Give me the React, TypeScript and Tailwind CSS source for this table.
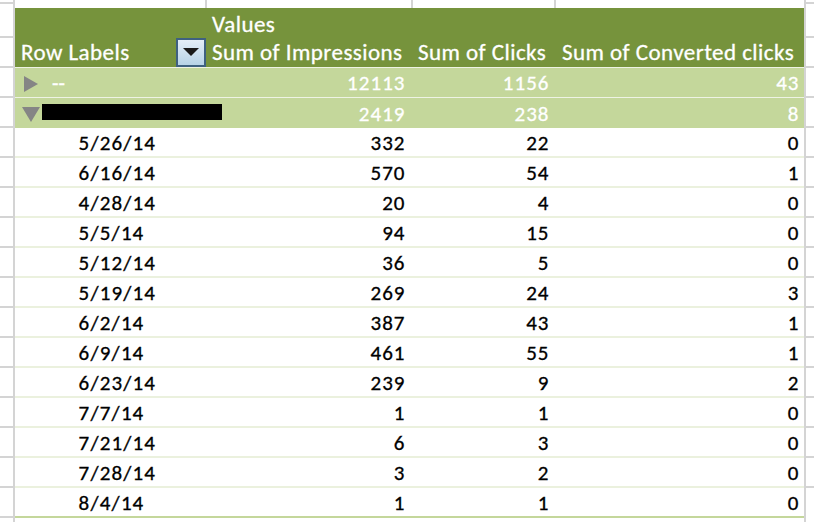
const rows: [string, number, number, number][] = [
  ['5/26/14', 332, 22, 0],
  ['6/16/14', 570, 54, 1],
  ['4/28/14', 20, 4, 0],
  ['5/5/14', 94, 15, 0],
  ['5/12/14', 36, 5, 0],
  ['5/19/14', 269, 24, 3],
  ['6/2/14', 387, 43, 1],
  ['6/9/14', 461, 55, 1],
  ['6/23/14', 239, 9, 2],
  ['7/7/14', 1, 1, 0],
  ['7/21/14', 6, 3, 0],
  ['7/28/14', 3, 2, 0],
  ['8/4/14', 1, 1, 0]
]

// Lato's figures are proportional; the sheet's font has tabular ones, so each glyph gets a fixed box
function Figures({ value }: { readonly value: string | number }): React.JSX.Element {
  return (
    <>
      {String(value)
        .split('')
        .map((ch, i) =>
          ch === '/' ? (
            <span key={i} className="inline-block w-[9.5px] text-center">
              /
            </span>
          ) : (
            <span key={i} className="inline-block w-[11.7px] text-center">
              {ch}
            </span>
          )
        )}
    </>
  )
}

function GutterLeft({ last = false }: { readonly last?: boolean }): React.JSX.Element {
  return (
    <div
      className={[
        'w-[15px] shrink-0 border-r-2 border-[#d4d4d4] bg-white',
        last ? '' : 'border-b-2'
      ].join(' ')}
    />
  )
}

function GutterRight({ last = false }: { readonly last?: boolean }): React.JSX.Element {
  return (
    <div
      className={[
        'flex-1 border-l-2 border-[#d4d4d4] bg-white',
        last ? '' : 'border-b-2'
      ].join(' ')}
    />
  )
}

function FilterButton(): React.JSX.Element {
  return (
    <div className="flex h-[29px] w-[30px] shrink-0 items-start justify-center border-2 border-[#3f6180] bg-gradient-to-b from-[#e4eef7] to-[#b7d3e7] pt-[8px]">
      <svg viewBox="0 0 16 8" className="h-[8px] w-[16px]">
        <polygon points="0,0 16,0 8,8" fill="#1a1a1a" />
      </svg>
    </div>
  )
}

function RightTriangle(): React.JSX.Element {
  return (
    <svg viewBox="0 0 14 16" className="h-[16px] w-[14px] shrink-0">
      <polygon points="0,0 14,8 0,16" fill="#858585" />
    </svg>
  )
}

function DownTriangle(): React.JSX.Element {
  return (
    <svg viewBox="0 0 18 15" className="h-[15px] w-[18px] shrink-0">
      <polygon points="0,0 18,0 9,15" fill="#858585" />
    </svg>
  )
}

export default function App(): React.JSX.Element {
  return (
    <div className="flex h-[522px] w-[814px] flex-col overflow-hidden bg-white font-[Carlito,Lato,sans-serif] text-[21px] leading-none text-black [-webkit-text-stroke:0.3px_currentColor]">
      {/* top strip of the sheet above the pivot */}
      <div className="flex h-[8px] shrink-0">
        <div className="w-[15px] shrink-0 border-r-2 border-[#d4d4d4]">
          <div className="h-[4px] border-b-2 border-[#d4d4d4]" />
        </div>
        <div className="grid w-[789px] grid-cols-[192px_206px_143px_248px]">
          <div className="border-r-2 border-[#d4d4d4]" />
          <div className="border-r-2 border-[#d4d4d4]" />
          <div className="border-r-2 border-[#d4d4d4]" />
          <div />
        </div>
        <div className="flex-1 border-l-2 border-[#d4d4d4]">
          <div className="h-[4px] border-b-2 border-[#d4d4d4]" />
        </div>
      </div>

      {/* header: Values */}
      <div className="flex h-[30px] shrink-0">
        <GutterLeft />
        <div className="grid w-[789px] grid-cols-[192px_206px_143px_248px] items-center bg-[#76933c] text-[23px] tracking-[0.45px] text-white">
          <div />
          <div className="pl-[5px] pt-[3px]">Values</div>
          <div />
          <div />
        </div>
        <GutterRight />
      </div>

      {/* header: column labels */}
      <div className="flex h-[30px] shrink-0">
        <GutterLeft />
        <div className="grid w-[789px] grid-cols-[192px_206px_143px_248px] items-center border-b border-[#eef3e4] bg-[#76933c] text-[23px] tracking-[0.45px] text-white">
          <div className="flex items-center justify-between pl-[6px] pr-[1px]">
            <span>Row Labels</span>
            <FilterButton />
          </div>
          <div className="whitespace-nowrap pl-[5px]">Sum of Impressions</div>
          <div className="whitespace-nowrap pl-[5px]">Sum of Clicks</div>
          <div className="whitespace-nowrap pl-[6px]">Sum of Converted clicks</div>
        </div>
        <GutterRight />
      </div>

      {/* collapsed group */}
      <div className="flex h-[30px] shrink-0">
        <GutterLeft />
        <div className="grid w-[789px] grid-cols-[192px_206px_143px_248px] items-center border-b border-[#eef3e4] bg-[#c4d79b] pt-[2px] text-white">
          <div className="flex items-center gap-[14px] pl-[9px]">
            <RightTriangle />
            <span>--</span>
          </div>
          <div className="pr-[8px] text-right">
            <Figures value={12113} />
          </div>
          <div className="pr-[7px] text-right">
            <Figures value={1156} />
          </div>
          <div className="pr-[5px] text-right">
            <Figures value={43} />
          </div>
        </div>
        <GutterRight />
      </div>

      {/* expanded group, its name blacked out */}
      <div className="flex h-[30px] shrink-0">
        <GutterLeft />
        <div className="relative grid w-[789px] grid-cols-[192px_206px_143px_248px] items-center bg-[#c4d79b] pt-[2px] text-white">
          <div className="flex items-center pl-[7px]">
            <DownTriangle />
            <div className="absolute left-[27px] top-[6px] h-[16px] w-[180px] bg-black" />
          </div>
          <div className="pr-[8px] text-right">
            <Figures value={2419} />
          </div>
          <div className="pr-[7px] text-right">
            <Figures value={238} />
          </div>
          <div className="pr-[5px] text-right">
            <Figures value={8} />
          </div>
        </div>
        <GutterRight />
      </div>

      {rows.map(([date, imp, clicks, conv], i) => {
        const last = i === rows.length - 1
        return (
          <div key={date} className="flex h-[30px] shrink-0">
            <GutterLeft />
            <div
              className={[
                'grid w-[789px] grid-cols-[192px_206px_143px_248px] items-center bg-white pt-[2px]',
                last ? 'border-b-2 border-[#c4d79b]' : 'border-b-2 border-[#ebf1de]'
              ].join(' ')}
            >
              <div className="pl-[63px]">
                <Figures value={date} />
              </div>
              <div className="pr-[8px] text-right">
                <Figures value={imp} />
              </div>
              <div className="pr-[7px] text-right">
                <Figures value={clicks} />
              </div>
              <div className="pr-[5px] text-right">
                <Figures value={conv} />
              </div>
            </div>
            <GutterRight last={last} />
          </div>
        )
      })}

      <div className="flex flex-1">
        <GutterLeft last />
        <div className="w-[789px]" />
        <GutterRight last />
      </div>
    </div>
  )
}
